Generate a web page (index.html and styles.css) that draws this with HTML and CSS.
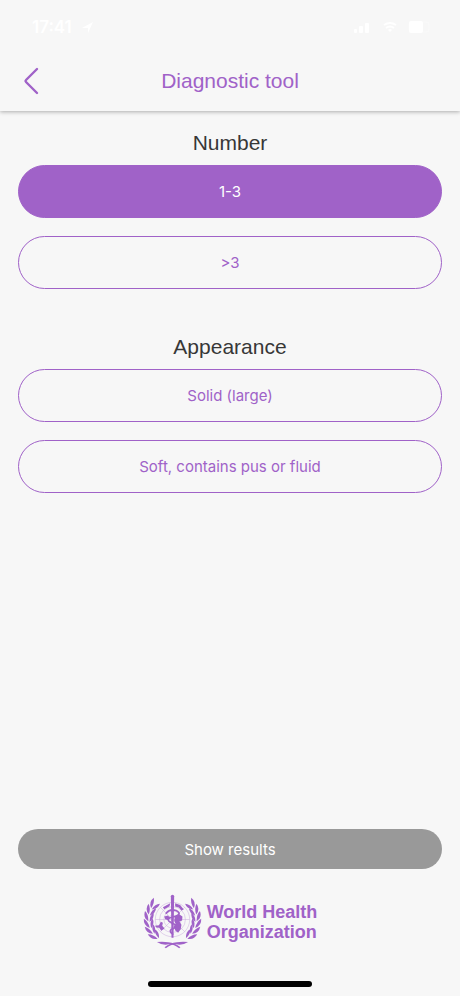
FILE: index.html
```html
<!DOCTYPE html>
<html lang="en">
<head>
  <meta charset="UTF-8">
  <meta name="viewport" content="width=device-width, initial-scale=1.0">
  <title>Diagnostic tool</title>
  <link rel="stylesheet" href="styles.css">
</head>
<body>
  <header class="header">
    <div class="status-bar">
      <div class="status-time">
        <span>17:41</span>
        <svg width="11" height="11" viewBox="0 0 11 11"><path d="M0 6L11 0L6 11V6Z" fill="currentColor"/></svg>
      </div>
      <div class="status-icons">
        <svg width="18" height="12" viewBox="0 0 18 12" fill="currentColor">
          <rect x="0" y="8" width="3" height="4" rx="1"/>
          <rect x="5" y="5" width="4" height="7" rx="1"/>
          <rect x="11" y="2" width="4" height="10" rx="1"/>
        </svg>
        <svg width="16" height="12" viewBox="0 0 16 12" fill="none" stroke="currentColor" stroke-width="2">
          <path d="M2 4Q8 0 14 4M4 7Q8 4 12 7"/>
          <path d="M8 11L6 9Q8 7 10 9Z" fill="currentColor" stroke="none"/>
        </svg>
        <svg width="24" height="12" viewBox="0 0 24 12">
          <rect x="1" y="1" width="20" height="10" rx="3" fill="none" stroke="currentColor" opacity=".3"/>
          <rect x="1" y="0" width="14" height="12" rx="2" fill="currentColor"/>
        </svg>
      </div>
    </div>
    <div class="toolbar">
      <button class="back" type="button" aria-label="Back">
        <svg width="16" height="28" viewBox="0 0 16 28"><path d="M14 2L3 13Q2 14 3 15L14 26" fill="none" stroke="currentColor" stroke-width="2.4" stroke-linecap="round"/></svg>
      </button>
      <h1>Diagnostic tool</h1>
    </div>
  </header>

  <main class="content">
    <section class="question">
      <h2>Number</h2>
      <button class="option selected" type="button" aria-pressed="true">1-3</button>
      <button class="option" type="button" aria-pressed="false">&gt;3</button>
    </section>
    <section class="question">
      <h2>Appearance</h2>
      <button class="option" type="button" aria-pressed="false">Solid (large)</button>
      <button class="option" type="button" aria-pressed="false">Soft, contains pus or fluid</button>
    </section>
  </main>

  <footer class="footer">
    <button class="results" type="button">Show results</button>
    <div class="logo">
      <svg class="emblem" viewBox="24 26 178 166" fill="currentColor">
        <defs>
          <g id="leaves">
            <path d="M41 116Q23 106 28 86Q40 96 41 116Z"/>
            <path d="M45 118Q43 99 54 89Q59 104 45 118Z"/>
          </g>
          <g id="branch">
            <use href="#leaves" transform="rotate(38 113 103)"/>
            <use href="#leaves" transform="rotate(22 113 103)"/>
            <use href="#leaves" transform="rotate(6 113 103)"/>
            <use href="#leaves" transform="rotate(-10 113 103)"/>
            <use href="#leaves" transform="rotate(-26 113 103)"/>
            <use href="#leaves" transform="rotate(-42 113 103)"/>
            <path d="M66 171Q86 169 100 172Q120 173 137 187L133 190Q116 177 102 178Q82 182 66 171Z"/>
          </g>
        </defs>
        <g fill="none" stroke="currentColor" stroke-width="1.5" opacity=".5">
          <circle cx="113" cy="103" r="52"/>
          <circle cx="113" cy="103" r="39"/>
          <circle cx="113" cy="103" r="26"/>
          <circle cx="113" cy="103" r="13"/>
          <path d="M61 103H165M113 51V155M76 66L150 140M76 140L150 66"/>
        </g>
        <!-- land -->
        <path d="M84 66L106 54L104 63L95 68L88 72Z"/>
        <path d="M121 54L136 59L147 73L140 76L132 67L121 64Z"/>
        <path d="M60 122L72 120L78 110L84 113L82 122L89 130L79 137L73 128L64 127Z"/>
        <path d="M121 92L135 89L143 94L142 106L134 109L140 119L138 132L130 143L122 137L117 125L122 115L118 106Z"/>
        <path d="M88 94L99 91L106 98L101 105L91 102Z"/>
        <!-- staff and snake -->
        <path d="M108 33Q108 28 113 28Q118 28 118 33L116 158H110Z"/>
        <path d="M94 84Q105 69 124 76Q143 86 122 93L108 97Q91 103 109 112L118 117Q128 124 116 130L109 133Q102 139 114 147" fill="none" stroke="currentColor" stroke-width="5" stroke-linecap="round"/>
        <use href="#branch"/>
        <use href="#branch" transform="matrix(-1 0 0 1 226 0)"/>
      </svg>
      <div class="logo-name">
        <p>World Health</p>
        <p>Organization</p>
      </div>
    </div>
    <div class="home-indicator"></div>
  </footer>
</body>
</html>
```
FILE: styles.css
```css
* {
  box-sizing: border-box;
}
body {
  display: flex;
  flex-direction: column;
  min-height: 100vh;
  margin: 0;
  background-color: #f7f7f7;
  color: #373737;
  font-family: Inter, "Liberation Sans", sans-serif;
}
h1, h2, p {
  margin: 0;
}
h1, h2 {
  font-family: "Liberation Sans", Arial, sans-serif;
  font-size: 21px;
  font-weight: 400;
  line-height: 32px;
  text-align: center;
}
button {
  padding: 0;
  border: none;
  background: none;
  font-family: inherit;
  font-size: 15px;
  cursor: pointer;
}
svg {
  display: block;
}

.header {
  box-shadow: 0 1px 4px rgba(0, 0, 0, 0.3);
}
.status-bar {
  display: flex;
  justify-content: space-between;
  align-items: center;
  height: 50px;
  padding: 4px 28px 0 32px;
  color: #fff;
}
.status-time, .status-icons {
  display: flex;
  align-items: center;
  gap: 10px;
}
.status-time {
  font-size: 17px;
  font-weight: 600;
}
.toolbar {
  display: grid;
  grid-template-columns: 32px 1fr 32px;
  align-items: center;
  height: 61px;
  padding: 0 15px;
  color: #a062c8;
}
.back {
  display: flex;
  justify-content: center;
  color: inherit;
}

.content {
  display: flex;
  flex: 1;
  flex-direction: column;
  gap: 42px;
  padding: 16px 18px;
}
.question {
  display: flex;
  flex-direction: column;
}
h2 {
  margin-bottom: 6px;
}
.option {
  height: 53px;
  border: 1px solid #a062c8;
  border-radius: 27px;
  color: #a062c8;
}
.option + .option {
  margin-top: 18px;
}
.option.selected {
  background-color: #a062c8;
  color: #fff;
}

.footer {
  display: flex;
  flex-direction: column;
  padding: 0 18px 9px;
}
.results {
  height: 40px;
  border-radius: 20px;
  background-color: #999;
  color: #fff;
}
.logo {
  display: flex;
  justify-content: center;
  align-items: center;
  gap: 5px;
  margin: 25px 0 32px;
  color: #a062c8;
}
.emblem {
  width: 59px;
  height: 55px;
}
.logo-name {
  font-family: "Liberation Sans", Arial, sans-serif;
  font-size: 18px;
  font-weight: 700;
  line-height: 20px;
}
.home-indicator {
  align-self: center;
  width: 164px;
  height: 6px;
  border-radius: 3px;
  background-color: #000;
}
```
